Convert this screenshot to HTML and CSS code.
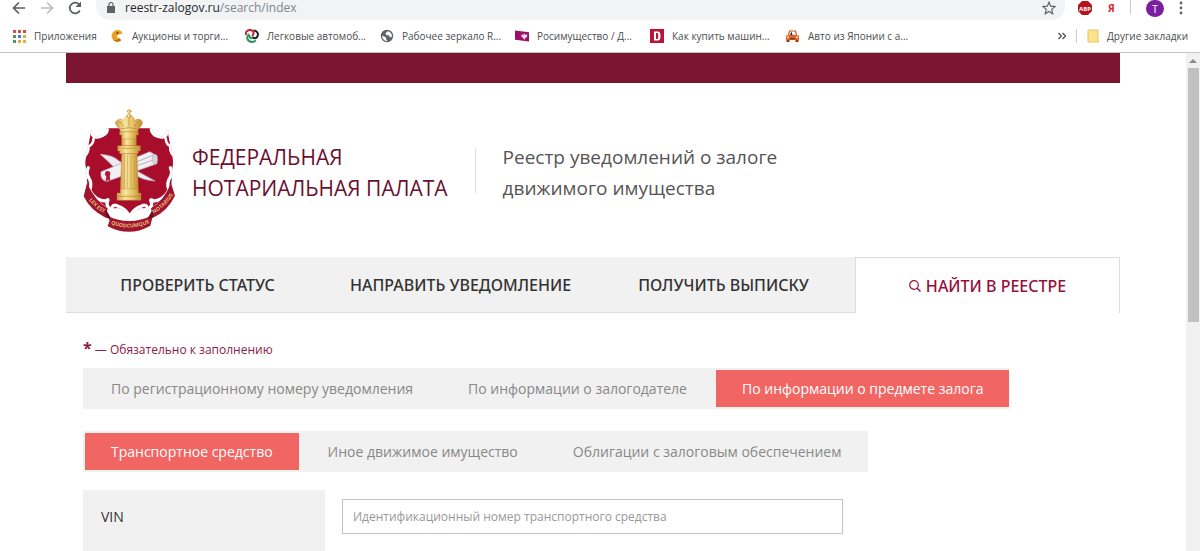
FILE: index.html
```
<!DOCTYPE html>
<html lang="ru">
<head>
    <meta charset="utf-8">
    <title>Реестр уведомлений о залоге движимого имущества</title>
    <link rel="stylesheet" href="styles.css">
</head>
<body>
    <div class="toolbar">
        <button class="tool-btn" aria-label="Назад">
            <svg width="14" height="14" viewBox="0 0 14 14"><path d="M13 7H2M7 1.500L1.500 7L7 12.500" fill="none" stroke="#5a5e62" stroke-width="1.700"/></svg>
        </button>
        <button class="tool-btn" aria-label="Вперёд">
            <svg width="14" height="14" viewBox="0 0 14 14"><path d="M1 7H12M7 1.500L12.500 7L7 12.500" fill="none" stroke="#bcbec0" stroke-width="1.700"/></svg>
        </button>
        <button class="tool-btn" aria-label="Обновить">
            <svg width="14" height="14" viewBox="0 0 14 14"><path d="M11.800 9.500A5.300 5.300 0 1 1 10.800 3.200" fill="none" stroke="#5a5e62" stroke-width="1.800"/><path d="M13 0.500V6H7.500Z" fill="#5a5e62"/></svg>
        </button>
        <div class="omnibox">
            <svg width="8" height="11" viewBox="0 0 8 11"><path d="M0 4h8v7H0z" fill="#5f6368"/><path d="M2 4.500V2.500a2 2 0 0 1 4 0V4.500" fill="none" stroke="#5f6368" stroke-width="1.200"/></svg>
            <span class="url">reestr-zalogov.ru<span class="url-path">/search/index</span></span>
            <button class="tool-btn" aria-label="В закладки">
                <svg width="14" height="14" viewBox="0 0 14 14"><path d="M7 1.200L8.700 5.200L13 5.600L9.700 8.400L10.700 12.700L7 10.400L3.300 12.700L4.300 8.400L1 5.600L5.300 5.200Z" fill="none" stroke="#5f6368" stroke-width="1.200"/></svg>
            </button>
        </div>
        <div class="extensions">
            <button class="tool-btn" aria-label="Adblock Plus">
                <svg width="16" height="16" viewBox="0 0 16 16"><path d="M5 1h6l4 4v6l-4 4H5l-4-4V5z" fill="#b5141c"/><text x="8" y="11" class="abp-text">ABP</text></svg>
            </button>
            <button class="tool-btn ya">Я</button>
            <span class="tool-sep"></span>
            <button class="avatar">T</button>
            <button class="tool-btn" aria-label="Меню">
                <svg width="4" height="14" viewBox="0 0 4 14" fill="#5f6368"><circle cx="2" cy="2" r="1.400"/><circle cx="2" cy="7" r="1.400"/><circle cx="2" cy="12" r="1.400"/></svg>
            </button>
        </div>
    </div>

    <div class="bookmarks">
        <a class="bookmark bookmark-apps" href="#">
            <svg width="14" height="14" viewBox="0 0 14 14"><path d="M1 1h3v3H1zM6 1h3v3H6zM11 1h3v3h-3z" fill="#cf5146"/><path d="M1 6h3v3H1z" fill="#4c9a5b"/><path d="M6 6h3v3H6z" fill="#4a7fc9"/><path d="M11 6h3v3h-3z" fill="#d9b23c"/><path d="M1 11h3v3H1z" fill="#4c9a5b"/><path d="M6 11h3v3H6zM11 11h3v3h-3z" fill="#d9b23c"/></svg>
            Приложения
        </a>
        <a class="bookmark" href="#">
            <svg width="14" height="14" viewBox="0 0 14 14"><path d="M11 2A6 6 0 1 0 11.500 11.500L9.500 9L7 8.500L7.500 6L12.500 4.500Z" fill="#e9a023"/><path d="M3 10.500A5 5 0 0 0 11 11L9 9.500A5 5 0 0 1 3 10.500Z" fill="#b9701a"/><circle cx="7.500" cy="4" r="1" fill="#5e3a08"/></svg>
            Аукционы и торги...
        </a>
        <a class="bookmark" href="#">
            <svg width="14" height="14" viewBox="0 0 14 14" fill="none" stroke-width="2"><path d="M1 6A4 4 0 0 1 8 2.500Q9.500 5 7 7" stroke="#d0202c"/><path d="M8.500 1.500A4 4 0 0 1 12 8Q10 10.500 7.500 8" stroke="#222"/><path d="M4 5Q1 8 3 11Q6 14.500 11 11.500" stroke="#27965a"/><path d="M4 6Q4 8.500 7 9.500" stroke="#27965a"/></svg>
            Легковые автомоб...
        </a>
        <a class="bookmark" href="#">
            <svg width="14" height="14" viewBox="0 0 14 14"><circle cx="7" cy="7" r="6.200" fill="#5f6368"/><path d="M7.500 2.200L5.500 4.500L6.500 6.200H9L10 8.500L12 7.500A5 5 0 0 0 7.500 2.200ZM2.200 6.500L6 8.500V10L7.500 12A5 5 0 0 1 2.200 6.500Z" fill="#fff"/></svg>
            Рабочее зеркало R...
        </a>
        <a class="bookmark" href="#">
            <svg width="14" height="14" viewBox="0 0 15 14"><path d="M0 1L15 3V13L0 11Z" fill="#9b1166"/><path d="M7 5L9 6L10 4L11 6L13 5L13 8L11.500 9L10 11L8.500 9L7 8Z" fill="#f4d9ea"/></svg>
            Росимущество / Д...
        </a>
        <a class="bookmark" href="#">
            <svg width="14" height="14" viewBox="0 0 14 14"><path d="M0 0h14v14H0z" fill="#b8143c"/><path d="M4 2.500H8Q10.500 2.500 10.500 7T8 11.500H4ZM6 4V10H7.500Q8.300 10 8.300 7T7.500 4Z" fill="#fff" fill-rule="evenodd"/></svg>
            Как купить машин...
        </a>
        <a class="bookmark" href="#">
            <svg width="15" height="14" viewBox="0 0 15 14"><path d="M3.500 6L4.500 2H10.500L11.500 6" fill="#fff" stroke="#c85a2c" stroke-width="1.200"/><path d="M5 6L6.500 2.500L7.500 6Z" fill="#222"/><path d="M1 6.500Q7.500 5 14 6.500V11H1Z" fill="#e2622d"/><path d="M1.500 11h3v2h-3zM10.500 11h3v2h-3z" fill="#8e3614"/><path d="M5 9h5v1.500H5z" fill="#8e3614"/><circle cx="3" cy="8.200" r="1" fill="#ffe9b0"/><circle cx="12" cy="8.200" r="1" fill="#ffe9b0"/></svg>
            Авто из Японии с а...
        </a>
        <div class="bookmarks-end">
            <button class="tool-btn" aria-label="Ещё закладки">
                <svg width="8" height="8" viewBox="0 0 8 8"><path d="M0.500 1L3.500 4L0.500 7M4.500 1L7.500 4L4.500 7" fill="none" stroke="#4a4d50" stroke-width="1.300"/></svg>
            </button>
            <span class="tool-sep"></span>
            <a class="bookmark-other" href="#">
                <svg width="12" height="14" viewBox="0 0 12 14"><path d="M1 1H11V10.500L11.500 13H1Z" fill="#fbe38b" stroke="#e5c55f"/></svg>
                Другие закладки
            </a>
        </div>
    </div>

    <div class="viewport">
        <div class="page">
            <div class="container">
                <div class="top-bar"></div>
                <header class="header">
                    <a class="brand" href="#">
                        <svg class="emblem" width="92" height="123" viewBox="38 24 276 369">
                            <defs>
                                <linearGradient id="gold" x1="0" x2="1">
                                    <stop offset="0" stop-color="#cf9c42"/>
                                    <stop offset="0.350" stop-color="#f8e6a2"/>
                                    <stop offset="0.650" stop-color="#e6c265"/>
                                    <stop offset="1" stop-color="#bf8b33"/>
                                </linearGradient>
                                <path id="ribbon-left" d="M48 286Q72 324 112 342"/>
                                <path id="ribbon-mid" d="M113 365Q178 396 246 362"/>
                                <path id="ribbon-right" d="M244 341Q288 318 312 276"/>
                            </defs>
                            <path d="M62 92Q66 114 88 110Q110 104 114 82H238Q244 106 264 110Q288 112 292 92L300 134Q294 150 306 166Q312 190 302 216Q310 250 290 286L246 318Q206 318 178 348Q150 318 108 318L64 284Q44 250 52 216Q40 190 48 166Q60 150 54 134Z" fill="#a80d2b"/>
                            <g fill="none" stroke-linecap="round" stroke-linejoin="round">
                                <path id="scroll-top" d="M62 92Q66 114 88 108Q110 102 112 86M70 112Q68 130 58 134M242 86Q246 104 266 108Q288 114 292 92M286 112Q288 130 298 134M54 136Q56 150 46 162M300 136Q298 150 308 162" stroke="#d5d2da" stroke-width="8"/>
                                <path d="M62 92Q66 114 88 108Q110 102 112 86M70 112Q68 130 58 134M242 86Q246 104 266 108Q288 114 292 92M286 112Q288 130 298 134M54 136Q56 150 46 162M300 136Q298 150 308 162" stroke="#fff" stroke-width="6"/>
                                <path d="M54 200Q46 218 56 232Q66 246 58 268Q76 300 106 300Q118 290 110 306Q110 320 124 326Q126 306 144 316Q164 322 178 346Q192 322 212 316Q230 306 232 326Q244 320 244 306Q236 290 250 300Q278 298 296 268Q288 246 298 232Q308 218 300 200" stroke="#d5d2da" stroke-width="10"/>
                                <path d="M54 200Q46 218 56 232Q66 246 58 268Q76 300 106 300Q118 290 110 306Q110 320 124 326Q126 306 144 316Q164 322 178 346Q192 322 212 316Q230 306 232 326Q244 320 244 306Q236 290 250 300Q278 298 296 268Q288 246 298 232Q308 218 300 200" stroke="#fff" stroke-width="8"/>
                            </g>
                            <path d="M118 330L142 320Q164 328 178 348Q192 328 214 320L238 330V356H118Z" fill="#fff"/>
                            <path d="M90 160Q128 162 146 180L254 240Q216 238 192 220L138 206L116 184Z" fill="#eceaf0" stroke="#b8b5be" stroke-width="2"/>
                            <path d="M92 212L238 152Q262 160 260 188L108 242Q88 236 92 212Z" fill="#f1eff3" stroke="#aaa6b0" stroke-width="2"/>
                            <path d="M196 184L254 160M200 194L258 174" stroke="#b4b0ba" stroke-width="3"/>
                            <ellipse cx="254" cy="175" rx="8" ry="15" fill="#d6d3da" stroke="#8f8b96"/>
                            <path d="M108 224L106 244L114 236L120 242L118 222Z" fill="#b51934"/>
                            <circle cx="112" cy="218" r="8" fill="#b51934"/>
                            <g fill="url(#gold)" stroke="#b5862f" stroke-width="1">
                                <path d="M148 92H204V102H198V114H154V102H148Z"/>
                                <path d="M154 114H198V134H154Z"/>
                                <path d="M142 134H210V150H204V158H148V150H142Z"/>
                                <path d="M154 158H200L204 264H150Z"/>
                                <path d="M150 264H204V276H212V298H140V276H150Z"/>
                                <path d="M148 84Q132 70 136 62Q146 48 160 58Q166 42 176 42Q188 42 194 58Q208 48 216 62Q218 72 204 84L202 92H150Z"/>
                                <circle cx="176" cy="44" r="6"/>
                                <path d="M174 38V33H170V29H174V25H179V29H183V33H179V38Z"/>
                            </g>
                            <path d="M162 162V262M171 162V262M182 162V262M192 162V262" stroke="#c99c45" stroke-width="2"/>
                            <path d="M150 84Q176 76 202 84M146 62Q156 64 160 78M176 50V76M206 62Q196 64 194 78M144 286H208M156 142H198" fill="none" stroke="#b5832f" stroke-width="2"/>
                            <path d="M50 246L40 286Q60 328 106 350L112 322Q76 302 50 246Z" fill="#a1142d"/>
                            <path d="M302 246L314 284Q292 330 248 350L242 322Q282 298 302 246Z" fill="#a1142d"/>
                            <path d="M106 342Q176 378 248 342L240 374Q178 410 112 376L118 358Z" fill="#a1142d"/>
                            <path d="M106 324V350L122 352ZM248 324V350L232 352Z" fill="#6f0b1e"/>
                            <text class="ribbon-text"><textPath href="#ribbon-left" startOffset="50%">LEX EST</textPath></text>
                            <text class="ribbon-text"><textPath href="#ribbon-mid" startOffset="50%">QUODCUMQUE</textPath></text>
                            <text class="ribbon-text"><textPath href="#ribbon-right" startOffset="50%">NOTARIUS</textPath></text>
                        </svg>
                        <span class="brand-name">ФЕДЕРАЛЬНАЯ<br>НОТАРИАЛЬНАЯ ПАЛАТА</span>
                    </a>
                    <span class="header-sep"></span>
                    <h1 class="site-title">Реестр уведомлений о залоге<br>движимого имущества</h1>
                </header>

                <nav class="main-nav">
                    <a class="nav-item" href="#">ПРОВЕРИТЬ СТАТУС</a>
                    <a class="nav-item" href="#">НАПРАВИТЬ УВЕДОМЛЕНИЕ</a>
                    <a class="nav-item" href="#">ПОЛУЧИТЬ ВЫПИСКУ</a>
                    <a class="nav-item active" href="#">
                        <svg width="12" height="12" viewBox="0 0 12 12"><circle cx="5" cy="5" r="4.300" fill="none" stroke="#97103c" stroke-width="1.200"/><path d="M8 8L11.500 11.500" stroke="#97103c" stroke-width="1.400"/></svg>
                        НАЙТИ В РЕЕСТРЕ
                    </a>
                </nav>

                <form class="search-form">
                    <p class="required-note"><b class="star">*</b> — Обязательно к заполнению</p>
                    <div class="pills">
                        <button type="button" class="pill">По регистрационному номеру уведомления</button>
                        <button type="button" class="pill">По информации о залогодателе</button>
                        <button type="button" class="pill active">По информации о предмете залога</button>
                    </div>
                    <div class="pills">
                        <button type="button" class="pill active">Транспортное средство</button>
                        <button type="button" class="pill">Иное движимое имущество</button>
                        <button type="button" class="pill">Облигации с залоговым обеспечением</button>
                    </div>
                    <div class="field">
                        <label class="field-label" for="vin">VIN</label>
                        <div class="field-value">
                            <input type="text" id="vin" class="field-input" placeholder="Идентификационный номер транспортного средства">
                        </div>
                    </div>
                </form>
            </div>
        </div>
        <div class="scrollbar">
            <svg class="scroll-arrow" width="8" height="4" viewBox="0 0 8 4"><path d="M0 4L4 0L8 4Z" fill="#8b8b8b"/></svg>
            <div class="scroll-thumb"></div>
        </div>
    </div>
</body>
</html>
```
FILE: styles.css
```
* {
    box-sizing: border-box;
}
body {
    margin: 0;
    height: 100vh;
    display: flex;
    flex-direction: column;
    overflow: hidden;
    background: #fff;
    color: #333;
    font-family: "Open Sans", "Noto Sans", sans-serif;
}
a {
    color: inherit;
    text-decoration: none;
}
button {
    font-family: inherit;
    border: 0;
    cursor: pointer;
}
svg {
    flex-shrink: 0;
}

/* Browser toolbar */
.toolbar {
    display: flex;
    align-items: flex-start;
    height: 20px;
    padding-left: 12px;
}
.tool-btn {
    display: flex;
    align-items: center;
    justify-content: center;
    height: 16px;
    padding: 0;
    background: none;
}
.toolbar > .tool-btn {
    width: 14px;
    margin-right: 14px;
}
.omnibox {
    flex: 1;
    display: flex;
    align-items: flex-start;
    height: 20px;
    padding: 0 9px 0 11px;
    background: #f1f3f4;
    border-radius: 0 0 14px 14px;
}
.omnibox > svg {
    margin-top: 2px;
}
.url {
    flex: 1;
    margin-left: 10px;
    font-size: 12px;
    line-height: 16px;
    color: #27292c;
}
.url-path {
    color: #80858a;
}
.extensions {
    display: flex;
    align-items: flex-start;
    width: 135px;
    padding: 0 17px 0 12px;
    justify-content: space-between;
}
.abp-text {
    font-size: 6px;
    font-weight: bold;
    fill: #fff;
    text-anchor: middle;
}
.ya {
    font-size: 10px;
    font-weight: bold;
    color: #d8232a;
}
.tool-sep {
    width: 1px;
    height: 14px;
    background: #ccc;
}
.avatar {
    width: 18px;
    height: 17px;
    padding: 0;
    border-radius: 9px;
    background: #7b1fa2;
    color: #fff;
    font-size: 10px;
    line-height: 16px;
}

/* Bookmarks bar */
.bookmarks {
    display: flex;
    align-items: center;
    height: 33px;
    padding-left: 12px;
    border-bottom: 1px solid #c4c4c4;
    font-size: 10px;
    color: #4a4d50;
    white-space: nowrap;
}
.bookmark {
    display: flex;
    align-items: center;
    gap: 8px;
    width: 135px;
}
.bookmark-apps {
    width: 98px;
}
.bookmarks-end {
    display: flex;
    align-items: center;
    gap: 10px;
    margin-left: auto;
    padding-right: 12px;
}
.bookmark-other {
    display: flex;
    align-items: center;
    gap: 8px;
}

/* Page */
.viewport {
    flex: 1;
    display: flex;
    min-height: 0;
}
.page {
    flex: 1;
    overflow: hidden;
}
.container {
    max-width: 1054px;
    margin: 0 auto;
}
.top-bar {
    height: 30px;
    background: #7a1430;
}
.header {
    display: flex;
    align-items: center;
    height: 174px;
    padding: 0 17px;
}
.brand {
    display: flex;
    align-items: center;
    gap: 17px;
    color: #6b1030;
}
.brand-name,
.site-title {
    margin: 0;
    padding-top: 6px;
    font-weight: 400;
    line-height: 31px;
}
.brand-name {
    font-size: 21px;
}
.site-title {
    font-size: 19px;
    color: #555;
}
.ribbon-text {
    font-size: 16px;
    font-weight: bold;
    fill: #e3b77a;
    text-anchor: middle;
}
.header-sep {
    width: 1px;
    height: 45px;
    margin: 0 27px;
    background: #ddd;
}

/* Main navigation */
.main-nav {
    display: grid;
    grid-template-columns: repeat(3, 1fr) 265px;
    height: 56px;
}
.nav-item {
    display: flex;
    align-items: center;
    justify-content: center;
    gap: 5px;
    background: #f1f1f1;
    border-bottom: 1px solid #dcdcdc;
    font-family: "Noto Sans", "Open Sans", sans-serif;
    font-size: 16px;
    font-weight: 500;
}
.nav-item.active {
    background: #fff;
    border: 1px solid #dcdcdc;
    border-bottom: 0;
    color: #97103c;
}

/* Search form */
.search-form {
    padding: 25px 17px 0;
}
.required-note {
    margin: 0 0 7px;
    font-size: 12px;
    line-height: 22px;
    color: #8c2048;
}
.star {
    font-size: 16px;
    line-height: 20px;
}
.pills {
    display: flex;
    gap: 3px;
    width: fit-content;
    margin-bottom: 22px;
    padding: 2px 0 2px 2px;
    background: #f1f1f1;
}
.pills + .pills {
    margin-bottom: 18px;
}
.pill {
    height: 37px;
    padding: 0 26px;
    background: none;
    color: #888;
    font-size: 14px;
}
.pill.active {
    background: #f16663;
    color: #fff;
}
.field {
    display: flex;
    gap: 17px;
}
.field-label {
    width: 242px;
    height: 90px;
    padding: 16px 18px;
    background: #f1f1f1;
    font-size: 14px;
    line-height: 22px;
}
.field-value {
    flex: 1;
    padding-top: 9px;
}
.field-input {
    width: 100%;
    max-width: 501px;
    height: 35px;
    padding: 0 10px;
    border: 1px solid #c4c4c4;
    font-family: inherit;
    font-size: 12px;
}
.field-input::placeholder {
    color: #999;
}

/* Scrollbar */
.scrollbar {
    display: flex;
    flex-direction: column;
    align-items: center;
    width: 14px;
    background: #f1f1f1;
}
.scroll-arrow {
    margin: 6px 0 5px;
}
.scroll-thumb {
    width: 11px;
    height: 51%;
    background: #c1c1c1;
}
```
